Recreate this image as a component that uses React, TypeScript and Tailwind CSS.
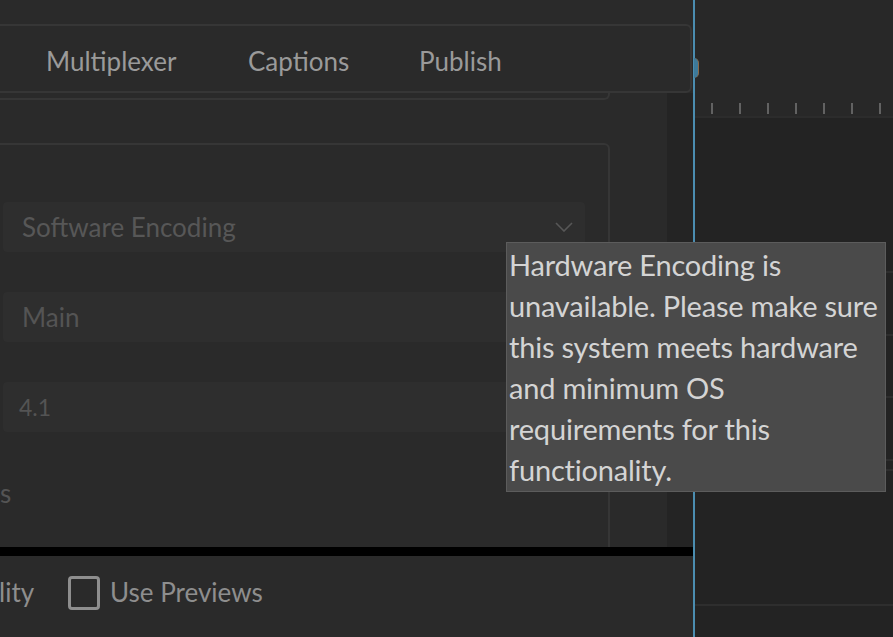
import React from "react";

const ticks = [0, 1, 2, 3, 4, 5, 6];

const tipLines = [
  "Hardware Encoding is",
  "unavailable. Please make sure",
  "this system meets hardware",
  "and minimum OS",
  "requirements for this",
  "functionality.",
];

function Field({ label, size = "text-[26px]", pad = "pl-[19px]" }: { label: string; size?: string; pad?: string }) {
  return (
    <div className={`h-[50px] w-[582px] rounded-[4px] bg-[#2e2e2e] flex items-center ${pad}`}>
      <span className={`${size} text-[#545454] leading-none`}>{label}</span>
    </div>
  );
}

export default function App() {
  return (
    <div
      className="relative w-[893px] h-[637px] overflow-hidden flex bg-[#232323]"
      style={{ fontFamily: "Lato, 'Noto Sans', sans-serif" }}
    >
      {/* left panel */}
      <div className="w-[693px] flex flex-col shrink-0">
        <div className="h-[547px] bg-[#2a2a2a] flex flex-col overflow-hidden">
          <div className="h-[24px] shrink-0" />
          <div className="h-[69px] shrink-0 -ml-[20px] w-[712px] border-2 border-[#363636] rounded-r-[6px] flex items-center pl-[64px] pt-[6px]">
            <span className="w-[202px] text-[26px] text-[#9a9a9a]">Multiplexer</span>
            <span className="w-[171px] text-[26px] text-[#9a9a9a]">Captions</span>
            <span className="text-[26px] text-[#9a9a9a]">Publish</span>
          </div>
          <div className="flex flex-1">
            <div className="flex-1 flex flex-col">
              <div className="h-[7px] -ml-[20px] w-[630px] border-b-2 border-r-2 border-[#363636] rounded-br-[6px]" />
              <div className="mt-[43px] flex-1 -ml-[20px] w-[630px] border-t-2 border-r-2 border-[#363636] rounded-tr-[6px] pl-[23px] pt-[57px] flex flex-col gap-[40px]">
                <div className="h-[50px] w-[582px] rounded-[4px] bg-[#2e2e2e] flex items-center pl-[19px] pr-[12px]">
                  <span className="flex-1 text-[26px] text-[#575757] leading-none">Software Encoding</span>
                  <svg width="18" height="10" viewBox="0 0 18 10" fill="none" stroke="#575757" strokeWidth="1.6">
                    <path d="M1 1l8 8 8-8" />
                  </svg>
                </div>
                <Field label="Main" />
                <Field label="4.1" size="text-[23px]" pad="pl-[16px]" />
                <div className="-ml-[3px] mt-[8px] text-[26px] text-[#545454] leading-none">s</div>
              </div>
            </div>
            <div className="w-[26px] bg-[#242424]" />
          </div>
        </div>
        <div className="h-[9px] bg-black shrink-0" />
        <div className="flex-1 bg-[#2a2a2a] flex items-center pb-[8px]">
          <span className="-ml-[1px] w-[69px] text-[26px] text-[#8e8e8e]">lity</span>
          <div className="w-[32px] h-[34px] border-[3px] border-[#8e8e8e] rounded-[4px]" />
          <span className="ml-[10px] text-[26px] text-[#8e8e8e]">Use Previews</span>
        </div>
      </div>

      {/* playhead line */}
      <div className="w-[2px] bg-[#4b8db0] shrink-0" />

      {/* right panel */}
      <div className="flex-1 flex flex-col">
        <div className="h-[118px] bg-[#282828] border-b-2 border-[#2c2c2c] flex items-start pl-[16px] gap-[26px] pt-[103px] shrink-0">
          {ticks.map((t) => (
            <div key={t} className="w-[2px] h-[11px] bg-[#626262]" />
          ))}
        </div>
        <div className="h-[155px] border-b-2 border-[#2e2e2e] shrink-0" />
        <div className="h-[63px] border-b-2 border-[#2e2e2e] shrink-0" />
        <div className="h-[62px] border-b-2 border-[#2e2e2e] shrink-0" />
        <div className="h-[63px] border-b-2 border-[#2e2e2e] shrink-0" />
        <div className="h-[10px] border-b-2 border-[#2e2e2e] shrink-0" />
        <div className="h-[135px] border-b-2 border-[#2e2e2e] shrink-0" />
      </div>

      {/* playhead handle */}
      <div className="absolute left-[694px] top-[58px] w-[5px] h-[20px] rounded-r-full bg-[#3d7a9a] border-r border-[#8a6a4a]" />

      {/* tooltip */}
      <div className="absolute left-[506px] top-[242px] w-[380px] h-[250px] bg-[#4a4a4a] border border-[#5c5c5c] px-[2px] pt-[1px] text-[29px] leading-[41px] tracking-[-0.2px] text-[#d4d4d4] whitespace-nowrap">
        {tipLines.map((l) => (
          <div key={l}>{l}</div>
        ))}
      </div>
    </div>
  );
}
